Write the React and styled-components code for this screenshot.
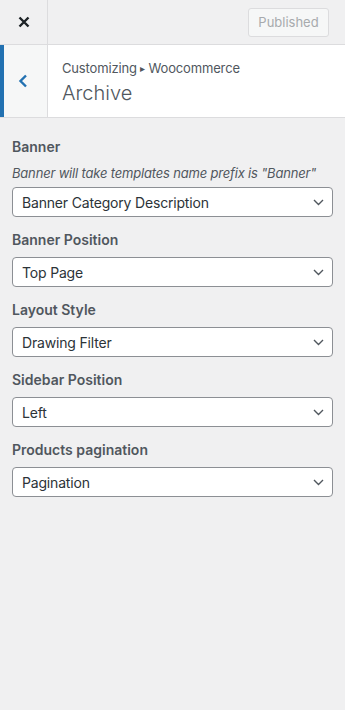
import React from 'react';
import styled, { createGlobalStyle } from 'styled-components';

const GlobalStyle = createGlobalStyle`
  html, body {
    margin: 0;
    padding: 0;
    background: #f0f0f1;
  }
  body {
    font-family: Inter, "Noto Sans", "Liberation Sans", sans-serif;
    -webkit-font-smoothing: antialiased;
  }
`;

const Panel = styled.div`
  width: 345px;
  min-height: 710px;
  background: #f0f0f1;
  color: #50575e;
`;

const Header = styled.header`
  display: flex;
  align-items: center;
  justify-content: space-between;
  height: 44px;
  border-bottom: 1px solid #dcdcde;
`;

const CloseButton = styled.button`
  display: flex;
  align-items: center;
  justify-content: center;
  width: 48px;
  height: 44px;
  padding: 0;
  background: transparent;
  border: none;
  border-right: 1px solid #dcdcde;
  color: #1d2327;
`;

const PublishButton = styled.button`
  height: 29px;
  width: 81px;
  margin-right: 16px;
  padding: 0;
  background: #f6f7f7;
  border: 1px solid #dcdcde;
  border-radius: 3px;
  color: #a7aaad;
  font-family: inherit;
  font-size: 13px;
`;

const SectionTitle = styled.div`
  display: flex;
  height: 72px;
  background: #fff;
  border-bottom: 1px solid #dcdcde;
`;

const BackButton = styled.button`
  display: flex;
  align-items: center;
  justify-content: center;
  width: 48px;
  padding: 0 6px 0 0;
  background: #f6f7f7;
  border: none;
  border-left: 4px solid #2271b1;
  border-right: 1px solid #dcdcde;
  color: #2271b1;
`;

const TitleText = styled.div`
  display: flex;
  flex-direction: column;
  justify-content: center;
  padding-left: 14px;
  padding-top: 3px;
`;

const Crumb = styled.span`
  font-size: 13px;
  line-height: 18px;
  letter-spacing: -0.16px;
  color: #50575e;
`;

const Arrow = styled.span`
  font-size: 10px;
  vertical-align: 1px;
`;

const Heading = styled.h3`
  margin: 3px 0 0;
  font-size: 20px;
  line-height: 26px;
  font-weight: 300;
  color: #50575e;
`;

const Controls = styled.div`
  display: flex;
  flex-direction: column;
  gap: 13px;
  padding: 19px 12px 12px;
`;

const Control = styled.div`
  display: flex;
  flex-direction: column;
`;

const Label = styled.span`
  font-size: 14px;
  line-height: 20px;
  font-weight: 600;
  color: #50575e;
  margin-bottom: 7px;
`;

const Description = styled.span`
  font-size: 13px;
  line-height: 18px;
  font-style: italic;
  letter-spacing: -0.18px;
  color: #50575e;
  margin-bottom: 5px;
`;

const SelectBox = styled.div`
  display: flex;
  align-items: center;
  justify-content: space-between;
  height: 30px;
  box-sizing: border-box;
  padding: 0 8px 0 9px;
  background: #fff;
  border: 1px solid #8c8f94;
  border-radius: 4px;
  font-size: 14px;
  letter-spacing: -0.18px;
  color: #2c3338;
`;

const Chevron = () => (
  <svg width="11" height="7" viewBox="0 0 11 7" fill="none">
    <path d="M1 1l4.5 4.5L10 1" stroke="#50575e" strokeWidth="1.4" />
  </svg>
);

const controls = [
  { label: 'Banner', desc: 'Banner will take templates name prefix is "Banner"', value: 'Banner Category Description' },
  { label: 'Banner Position', value: 'Top Page' },
  { label: 'Layout Style', value: 'Drawing Filter' },
  { label: 'Sidebar Position', value: 'Left' },
  { label: 'Products pagination', value: 'Pagination' },
];

export default function App() {
  return (
    <Panel>
      <GlobalStyle />
      <Header>
        <CloseButton aria-label="Close">
          <svg width="12" height="12" viewBox="0 0 12 12">
            <path d="M1.5 1.5l9 9M10.5 1.5l-9 9" stroke="currentColor" strokeWidth="2.4" />
          </svg>
        </CloseButton>
        <PublishButton disabled>Published</PublishButton>
      </Header>

      <SectionTitle>
        <BackButton aria-label="Back">
          <svg width="10" height="14" viewBox="0 0 10 14">
            <path d="M8 1.5L2.5 7L8 12.5" stroke="currentColor" strokeWidth="2.4" fill="none" />
          </svg>
        </BackButton>
        <TitleText>
          <Crumb>
            Customizing <Arrow>▸</Arrow> Woocommerce
          </Crumb>
          <Heading>Archive</Heading>
        </TitleText>
      </SectionTitle>

      <Controls>
        {controls.map((c) => (
          <Control key={c.label}>
            <Label>{c.label}</Label>
            {c.desc && <Description>{c.desc}</Description>}
            <SelectBox>
              {c.value}
              <Chevron />
            </SelectBox>
          </Control>
        ))}
      </Controls>
    </Panel>
  );
}
